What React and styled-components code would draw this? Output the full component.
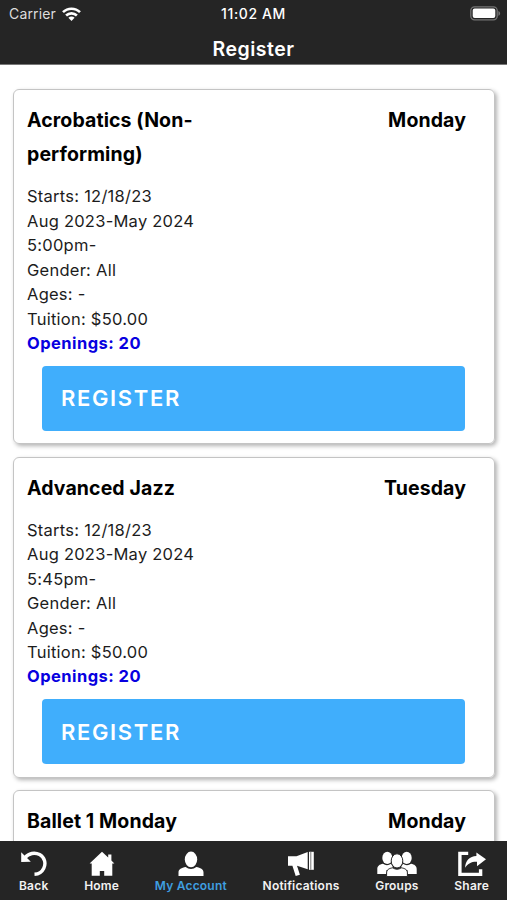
import styled, { createGlobalStyle } from "styled-components";

const classes = [
  {
    name: "Acrobatics (Non-performing)",
    day: "Monday",
    time: "5:00pm-",
  },
  {
    name: "Advanced Jazz",
    day: "Tuesday",
    time: "5:45pm-",
  },
  {
    name: "Ballet 1 Monday",
    day: "Monday",
  },
];

function App() {
  return (
    <>
      <GlobalStyle />
      <Screen>
        <Header>
          <StatusBar>
            <Carrier>
              Carrier
              <svg width="19" height="14" viewBox="0 0 19 14">
                <g fill="none" stroke="#fff" strokeWidth="2.6">
                  <path d="M1 5.2C5.7.5 13.3.5 18 5.2" />
                  <path d="M4.1 8.5c3-2.9 7.8-2.9 10.8 0" />
                </g>
                <path fill="#fff" d="M6.4 10.7c1.8-1.6 4.4-1.6 6.2 0L9.5 13.9z" />
              </svg>
            </Carrier>
            <Clock>11:02 AM</Clock>
            <Battery>
              <svg width="31" height="15" viewBox="0 0 31 15">
                <rect
                  x="0.8"
                  y="0.8"
                  width="26.4"
                  height="13"
                  rx="3.8"
                  fill="none"
                  stroke="#747474"
                  strokeWidth="1.3"
                />
                <rect x="2.7" y="2.6" width="22.6" height="9.4" rx="2" fill="#fff" />
                <path fill="#747474" d="M28.4 5c2.3.8 2.3 4 0 4.8z" />
              </svg>
            </Battery>
          </StatusBar>
          <PageTitle>Register</PageTitle>
        </Header>
        <ClassList>
          {classes.map((item) => (
            <Card key={item.name}>
              <CardHead>
                <ClassName>{item.name}</ClassName>
                <Day>{item.day}</Day>
              </CardHead>
              {item.time && (
                <>
                  <Details>
                    <p>Starts: 12/18/23</p>
                    <p>Aug 2023-May 2024</p>
                    <p>{item.time}</p>
                    <p>Gender: All</p>
                    <p>Ages: -</p>
                    <p>Tuition: $50.00</p>
                    <Openings>Openings: 20</Openings>
                  </Details>
                  <RegisterButton>REGISTER</RegisterButton>
                </>
              )}
            </Card>
          ))}
        </ClassList>
        <TabBar>
          <Tab>
            <svg width="28" height="26" viewBox="0 0 28 26">
              <path
                d="M5.2 6.6C8.5 2.2 14.8 1 19.6 3.6c5 2.7 6.6 8.6 4.2 13.6-1.8 3.8-5 5.8-9.3 6"
                fill="none"
                stroke="#fff"
                strokeWidth="3.4"
              />
              <path fill="#fff" d="M1.2 1.2V11l9.6-.2-3-3z" />
            </svg>
            <span>Back</span>
          </Tab>
          <Tab>
            <svg width="26" height="26" viewBox="0 0 26 26">
              <path
                fill="#fff"
                d="M13 .8.6 12.5h2.1v12.3h8.1V20h4.4v4.8h8.1V12.5h2.1l-3-2.9V3.6h-3.2v2.9z"
              />
            </svg>
            <span>Home</span>
          </Tab>
          <Tab $active>
            <svg width="26" height="26" viewBox="0 0 26 26">
              <ellipse cx="13" cy="8.4" rx="6.2" ry="7.8" fill="#fff" />
              <path
                fill="#fff"
                d="M.5 25v-3.6c0-3.2 3.1-4.8 7.2-5.4 3 2.6 7.6 2.6 10.6 0 4.1.6 7.2 2.2 7.2 5.4V25z"
              />
            </svg>
            <span>My Account</span>
          </Tab>
          <Tab>
            <svg width="28" height="26" viewBox="0 0 28 26">
              <path fill="#fff" d="M1 5.3h8.5L20.7 1v17.3L10 14.8l2.9 8.9-4.2 1.2-3.3-10.1H1z" />
              <path fill="#fff" d="M22 .8h4.8v18H22z" />
              <path stroke="#777" strokeWidth="1" d="M23.8.8v18" />
            </svg>
            <span>Notifications</span>
          </Tab>
          <Tab>
            <svg width="40" height="26" viewBox="0 0 40 26">
              <g fill="#fff">
                <ellipse cx="10.3" cy="6.9" rx="5" ry="6.1" />
                <ellipse cx="29.7" cy="6.9" rx="5" ry="6.1" />
                <path d="M.3 23v-4.8c0-3.4 2.4-4.7 5.6-5.4 2.8 1.9 5.4 1.9 8.2 0l2 3.7-6.6 2.8V23z" />
                <path d="M39.7 23v-4.8c0-3.4-2.4-4.7-5.6-5.4-2.8 1.9-5.4 1.9-8.2 0l-2 3.7 6.6 2.8V23z" />
              </g>
              <g fill="#fff" stroke="#252525" strokeWidth="1">
                <path d="M9.6 25.6v-3.7c0-3.2 2.6-4.6 6.2-5.1 2.5 1.9 5.9 1.9 8.4 0 3.6.5 6.2 1.9 6.2 5.1v3.7z" />
                <ellipse cx="20" cy="9.9" rx="5.8" ry="7.1" />
              </g>
            </svg>
            <span>Groups</span>
          </Tab>
          <Tab>
            <svg width="30" height="26" viewBox="0 0 30 26">
              <path
                d="M11.2 2.4H2.9v21h20.7v-5.2"
                fill="none"
                stroke="#fff"
                strokeWidth="3.4"
              />
              <path
                fill="#fff"
                d="M19.4 1.6 29 8.2l-9 7v-4.5c-5-.3-8.8 1.4-11.9 6.1C8.4 9.7 12.6 5.4 19.4 5.1z"
              />
            </svg>
            <span>Share</span>
          </Tab>
        </TabBar>
      </Screen>
    </>
  );
}

const GlobalStyle = createGlobalStyle`
  * {
    box-sizing: border-box;
    margin: 0;
    padding: 0;
  }

  body {
    font-family: Inter, "Liberation Sans", sans-serif;
    background: #fff;
    overflow: hidden;
  }
`;

const Screen = styled.div`
  display: flex;
  flex-direction: column;
  width: 507px;
  height: 900px;
  overflow: hidden;
`;

const Header = styled.header`
  flex: none;
  height: 65px;
  background: #252525;
  border-bottom: 1px solid #777;
  color: #fff;
`;

const StatusBar = styled.div`
  display: grid;
  grid-template-columns: 1fr auto 1fr;
  align-items: center;
  height: 27px;
  padding: 0 6px;
  font-size: 14px;
`;

const Carrier = styled.div`
  display: flex;
  align-items: center;
  gap: 6px;
  padding-left: 3px;
  color: #ddd;
  letter-spacing: 0.15px;
`;

const Clock = styled.div`
  font-weight: 500;
  letter-spacing: 0.6px;
`;

const Battery = styled.div`
  display: flex;
  justify-content: flex-end;
`;

const PageTitle = styled.h1`
  font-size: 19.5px;
  line-height: 44px;
  font-weight: 600;
  letter-spacing: 0.5px;
  text-align: center;
`;

const ClassList = styled.main`
  flex: 1;
  min-height: 0;
  display: flex;
  flex-direction: column;
  gap: 12.5px;
  padding: 24px 12px 0 13px;
  overflow: hidden;
`;

const Card = styled.section`
  flex: none;
  min-height: 80px;
  padding: 13px 28px 12.3px 13px;
  border: 1px solid #c4c4c4;
  border-radius: 6px;
  box-shadow: 2px 2px 4px rgba(0, 0, 0, 0.3);
`;

const CardHead = styled.div`
  display: flex;
  justify-content: space-between;
  font-size: 19.5px;
  line-height: 34.2px;
  font-weight: 700;
  letter-spacing: 0.1px;
  color: #000;
`;

const ClassName = styled.h2`
  width: 220px;
  font-size: inherit;
  font-weight: inherit;
`;

const Day = styled.div`
  text-align: right;
`;

const Details = styled.div`
  margin-top: 12.9px;
  font-size: 16.5px;
  line-height: 24.45px;
  letter-spacing: 0.25px;
  color: #1c1c1c;
`;

const Openings = styled.p`
  font-weight: 700;
  letter-spacing: 0.45px;
  color: #0800e0;
`;

const RegisterButton = styled.button`
  display: block;
  width: 423px;
  height: 65px;
  margin: 10.4px 0 0 15px;
  padding: 0 19px;
  border: none;
  border-radius: 4px;
  background: #40aefc;
  color: #fff;
  font-family: inherit;
  font-size: 22px;
  font-weight: 600;
  letter-spacing: 1.65px;
  text-align: left;
`;

const TabBar = styled.nav`
  flex: none;
  display: flex;
  justify-content: space-between;
  height: 59px;
  padding: 10px 18px 0 19px;
  background: #252525;
`;

const Tab = styled.div`
  display: flex;
  flex-direction: column;
  align-items: center;
  color: ${({ $active }) => ($active ? "#3f9fe0" : "#f2f2f2")};
  font-size: 12px;
  line-height: 18px;
  font-weight: 600;
  letter-spacing: 0.2px;

  svg {
    flex: none;
  }
`;

export default App;
